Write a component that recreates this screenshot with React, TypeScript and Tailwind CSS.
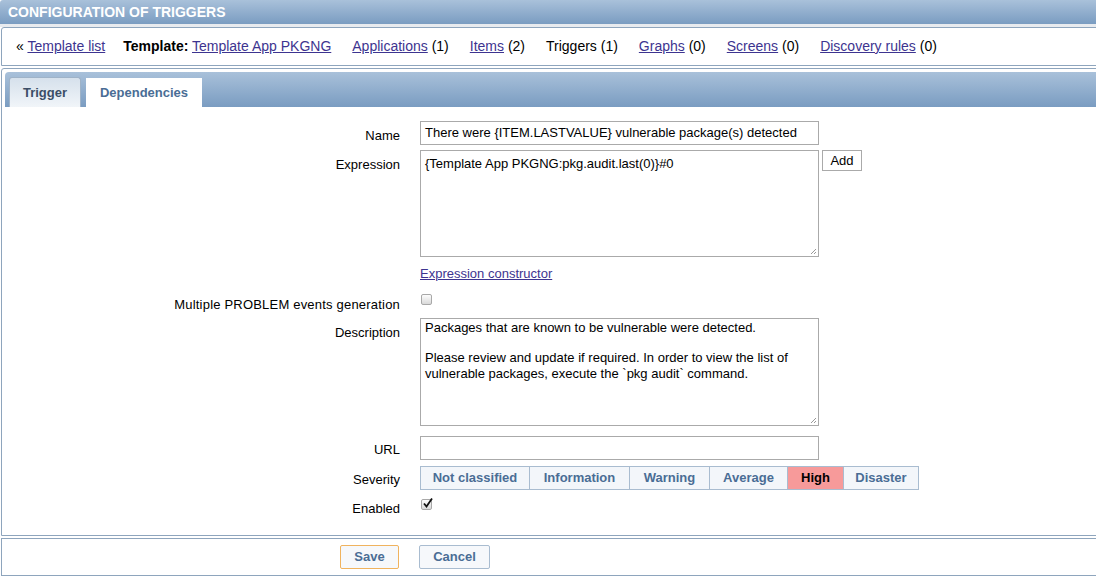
import React from 'react';

const linkCls = 'text-[#3d3490] underline';

const Checkbox: React.FC<{ checked?: boolean }> = ({ checked }) => (
    <span className="relative inline-block w-[11px] h-[11px] rounded-[2px] border border-[#a8a8a8] bg-gradient-to-b from-[#fdfdfd] to-[#d9d9d9]">
        {checked && (
            <svg className="absolute left-[0px] top-[-3px]" width="12" height="12" viewBox="0 0 12 12">
                <path d="M2 6.5 L4.5 9.5 L10 1.5" stroke="#111" strokeWidth="1.8" fill="none" />
            </svg>
        )}
    </span>
);

const severities = ['Not classified', 'Information', 'Warning', 'Average', 'High', 'Disaster'];
const sevWidths = ['w-[110px]', 'w-[101px]', 'w-[81px]', 'w-[79px]', 'w-[57px]', 'w-[76px]'];

const Resize = () => (
    <svg className="absolute right-[1px] bottom-[1px]" width="8" height="8" viewBox="0 0 8 8">
        <path d="M7 2 L2 7 M7 5 L5 7" stroke="#999" strokeWidth="1" />
    </svg>
);

export default function App() {
    return (
        <div className="w-[1096px] h-[577px] overflow-hidden bg-white text-black" style={{ fontFamily: '"Liberation Sans", Arial, sans-serif' }}>
            <div className="w-[1120px]">
                {/* Header */}
                <div className="h-[24px] rounded-tl-[3px] bg-gradient-to-b from-[#a9c1da] to-[#7a9cc1] pl-[8px] flex items-center">
                    <span className="text-white font-bold text-[14px]">CONFIGURATION OF TRIGGERS</span>
                </div>
                <div className="h-[3px] bg-[#e8ebef]" />

                {/* Navigation */}
                <div className="h-[39px] border border-[#8ea5bd] rounded-tl-[3px] ml-[1px] flex items-center pl-[14px] text-[14px] gap-[21px]">
                    <span className="mr-[-3px]">« <a className={linkCls}>Template list</a></span>
                    <span><b>Template:</b> <a className={linkCls}>Template App PKGNG</a></span>
                    <span><a className={linkCls}>Applications</a> (1)</span>
                    <span><a className={linkCls}>Items</a> (2)</span>
                    <span>Triggers (1)</span>
                    <span><a className={linkCls}>Graphs</a> (0)</span>
                    <span><a className={linkCls}>Screens</a> (0)</span>
                    <span><a className={linkCls}>Discovery rules</a> (0)</span>
                </div>

                {/* Main panel */}
                <div className="mt-[2px] ml-[1px] h-[468px] border border-[#8ea5bd] rounded-tl-[3px] pt-[3px] pl-[3px]">
                    <div className="h-[35px] rounded-tl-[4px] bg-gradient-to-b from-[#a9c1da] to-[#7a9cc1] flex items-end pl-[4px] gap-[5px]">
                        <div className="h-[30px] w-[72px] rounded-t-[3px] border border-b-0 border-[#9fb3c8] bg-gradient-to-b from-[#d6e1ec] to-[#f1f5f9] flex items-center justify-center text-[13px] font-bold text-[#3b4e66]">
                            Trigger
                        </div>
                        <div className="h-[29px] w-[116px] bg-white flex items-center justify-center text-[13px] font-bold text-[#4a6d95]">
                            Dependencies
                        </div>
                    </div>

                    <div className="text-[13px] pt-[14px]">
                        {/* Name */}
                        <div className="flex items-center h-[24px]">
                            <div className="w-[395px] text-right pt-[5px]">Name</div>
                            <div className="ml-[20px] w-[399px] h-[24px] border border-[#aaa] px-[4px] flex items-center">
                                There were {'{'}ITEM.LASTVALUE{'}'} vulnerable package(s) detected
                            </div>
                        </div>

                        {/* Expression */}
                        <div className="flex items-start mt-[5px]">
                            <div className="w-[395px] text-right pt-[5px]">Expression</div>
                            <div className="ml-[20px] relative w-[399px] h-[107px] border border-[#aaa] px-[4px] pt-[3px]">
                                {'{'}Template App PKGNG:pkg.audit.last(0){'}'}#0
                                <Resize />
                            </div>
                            <div className="ml-[3px] h-[21px] w-[40px] border border-[#aaa] bg-white flex items-center justify-center text-[13px]">
                                Add
                            </div>
                        </div>

                        {/* Expression constructor */}
                        <div className="flex items-center h-[22px] mt-[6px]">
                            <div className="w-[395px]" />
                            <a className={'ml-[20px] ' + linkCls}>Expression constructor</a>
                        </div>

                        {/* Multiple PROBLEM */}
                        <div className="flex items-start h-[24px] mt-[7px]">
                            <div className="w-[395px] text-right pt-[3px] tracking-[0.2px]">Multiple PROBLEM events generation</div>
                            <div className="ml-[21px] -mt-[1px]"><Checkbox /></div>
                        </div>

                        {/* Description */}
                        <div className="flex items-start mt-[2px]">
                            <div className="w-[395px] text-right pt-[5px]">Description</div>
                            <div className="ml-[20px] relative w-[399px] h-[108px] border border-[#aaa] px-[4px] pt-[1px] leading-[16px]">
                                <p>Packages that are known to be vulnerable were detected.</p>
                                <p className="mt-[14px]">Please review and update if required. In order to view the list of vulnerable packages, execute the `pkg audit` command.</p>
                                <Resize />
                            </div>
                        </div>

                        {/* URL */}
                        <div className="flex items-center h-[24px] mt-[10px]">
                            <div className="w-[395px] text-right pt-[4px]">URL</div>
                            <div className="ml-[20px] w-[399px] h-[24px] border border-[#aaa]" />
                        </div>

                        {/* Severity */}
                        <div className="flex items-center h-[24px] mt-[6px]">
                            <div className="w-[395px] text-right pt-[4px]">Severity</div>
                            <div className="ml-[20px] flex">
                                {severities.map((s, i) => (
                                    <div
                                        key={s}
                                        className={
                                            'h-[24px] flex items-center justify-center text-[13px] font-bold border border-[#a9bcd0] ' +
                                            sevWidths[i] +
                                            (i > 0 ? ' -ml-[1px]' : '') +
                                            (s === 'High' ? ' bg-[#f79a9a] text-black' : ' bg-[#f3f6fa] text-[#4a6d95]')
                                        }
                                    >
                                        {s}
                                    </div>
                                ))}
                            </div>
                        </div>

                        {/* Enabled */}
                        <div className="flex items-start h-[24px] mt-[5px]">
                            <div className="w-[395px] text-right pt-[4px]">Enabled</div>
                            <div className="ml-[21px] pt-[1px]"><Checkbox checked /></div>
                        </div>
                    </div>
                </div>

                {/* Footer */}
                <div className="mt-[2px] ml-[1px] h-[38px] border border-[#8ea5bd] flex items-center">
                    <div className="w-[397px] flex justify-end">
                        <div className="h-[24px] w-[59px] rounded-[2px] border border-[#f0b35e] bg-[#f6f8fb] flex items-center justify-center text-[13px] font-bold text-[#4a6d95]">
                            Save
                        </div>
                    </div>
                    <div className="ml-[20px] h-[24px] w-[71px] rounded-[2px] border border-[#a9bcd0] bg-[#f6f8fb] flex items-center justify-center text-[13px] font-bold text-[#4a6d95]">
                        Cancel
                    </div>
                </div>
            </div>
        </div>
    );
}
